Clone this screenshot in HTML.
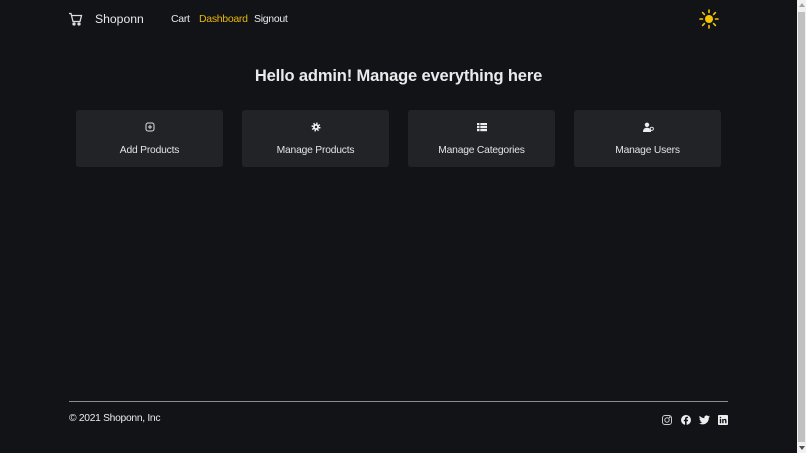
<!DOCTYPE html>
<html><head><meta charset="utf-8"><style>
*{margin:0;padding:0;box-sizing:border-box}
html,body{width:806px;height:453px;overflow:hidden;background:#121316;font-family:"Liberation Sans",sans-serif;color:#e9eaec}
.abs{position:absolute}
.nav{font-size:10.5px;letter-spacing:-0.3px;top:13px}
.card{position:absolute;top:110px;height:57px;background:#212327;border-radius:3px;text-align:center;font-size:10.3px;letter-spacing:-0.2px;color:#e2e3e5}
.card svg{position:absolute;top:12px;left:50%;margin-left:-5px}
.card span{position:absolute;top:35px;left:0;right:0}
</style></head><body>
<svg class="abs" style="left:68px;top:12px" width="15" height="14" viewBox="0 0 15 14" fill="none" stroke="#ddd" stroke-width="1.3"><path d="M1 1.5h2l2 8h7l1.5-6H4"/><circle cx="6" cy="12" r="1" fill="#ddd"/><circle cx="11" cy="12" r="1" fill="#ddd"/></svg>
<div class="abs" style="left:95px;top:12px;font-size:12.2px">Shoponn</div>
<div class="abs nav" style="left:171px">Cart</div>
<div class="abs nav" style="left:199px;color:#e5b80b">Dashboard</div>
<div class="abs nav" style="left:254px">Signout</div>
<svg class="abs" style="left:699px;top:9px" width="20" height="20" viewBox="0 0 20 20" stroke="#f5c400" stroke-width="1.6" stroke-linecap="round"><circle cx="10" cy="10" r="4" fill="#f5c400" stroke="none"/><path d="M10 1v2.5M10 16.5V19M1 10h2.5M16.5 10H19M3.6 3.6l1.8 1.8M14.6 14.6l1.8 1.8M3.6 16.4l1.8-1.8M14.6 5.4l1.8-1.8"/></svg>
<div class="abs" style="left:0;width:797px;top:67px;text-align:center;font-size:16.5px;font-weight:bold;letter-spacing:-0.15px">Hello admin! Manage everything here</div>
<div class="card" style="left:76px;width:147px"><svg width="10" height="10" viewBox="0 0 10 10" fill="none" stroke="#ddd" stroke-width="1"><rect x="1" y="1" width="8" height="8" rx="2"/><path d="M5 3v4M3 5h4"/></svg><span>Add Products</span></div>
<div class="card" style="left:242px;width:147px"><svg width="10" height="10" viewBox="0 0 10 10"><circle cx="5" cy="5" r="3.3" fill="none" stroke="#eee" stroke-width="2.4" stroke-dasharray="1.3 1.3"/><circle cx="5" cy="5" r="3" fill="#eee"/><circle cx="5" cy="5" r="1.2" fill="#212327"/></svg><span>Manage Products</span></div>
<div class="card" style="left:408px;width:147px"><svg width="10" height="10" viewBox="0 0 10 10" fill="#eee"><rect x="0" y="1" width="2.5" height="2.2"/><rect x="3.3" y="1" width="6.7" height="2.2"/><rect x="0" y="4" width="2.5" height="2.2"/><rect x="3.3" y="4" width="6.7" height="2.2"/><rect x="0" y="7" width="2.5" height="2.2"/><rect x="3.3" y="7" width="6.7" height="2.2"/></svg><span>Manage Categories</span></div>
<div class="card" style="left:574px;width:147px"><svg width="11" height="10" viewBox="0 0 11 10" fill="#eee"><circle cx="4" cy="2.8" r="2.2"/><path d="M0 10c0-3 1.5-4.3 4-4.3S8 7 8 10z"/><circle cx="8.8" cy="6.8" r="1.6" fill="none" stroke="#eee" stroke-width="0.9"/></svg><span>Manage Users</span></div>
<div class="abs" style="left:69px;top:401px;width:659px;height:1px;background:#8a8c90"></div>
<div class="abs" style="left:69px;top:413px;font-size:10.3px;letter-spacing:-0.3px">© 2021 Shoponn, Inc</div>
<svg class="abs" style="left:662px;top:415px" width="10" height="10" viewBox="0 0 10 10" fill="none" stroke="#ccc" stroke-width="1"><rect x="0.5" y="0.5" width="9" height="9" rx="2.5"/><circle cx="5" cy="5" r="2.2"/><circle cx="7.7" cy="2.3" r=".4" fill="#ccc"/></svg>
<svg class="abs" style="left:681px;top:415px" width="10" height="10" viewBox="0 0 10 10"><circle cx="5" cy="5" r="5" fill="#eee"/><path d="M5.6 10V6.2h1.3l.2-1.5H5.6v-.9c0-.4.1-.7.7-.7h.8V1.8c-.2 0-.6-.1-1.2-.1-1.1 0-1.9.7-1.9 2v1H2.8v1.5H4V10z" fill="#121316"/></svg>
<svg class="abs" style="left:699px;top:415px" width="11" height="10" viewBox="0 0 24 20"><path fill="#eee" d="M24 2.4a10 10 0 0 1-2.8.8A5 5 0 0 0 23.3.4a10 10 0 0 1-3.1 1.2A4.9 4.9 0 0 0 11.8 6 14 14 0 0 1 1.7.9a4.9 4.9 0 0 0 1.5 6.6A4.9 4.9 0 0 1 1 6.9a4.9 4.9 0 0 0 3.9 4.9 5 5 0 0 1-2.2.1 4.9 4.9 0 0 0 4.6 3.4A9.9 9.9 0 0 1 0 17.3 14 14 0 0 0 7.5 19.5c9.1 0 14-7.5 14-14v-.6A10 10 0 0 0 24 2.4z"/></svg>
<svg class="abs" style="left:718px;top:415px" width="10" height="10" viewBox="0 0 10 10"><rect width="10" height="10" rx="1" fill="#eee"/><rect x="1.8" y="4" width="1.4" height="4.3" fill="#121316"/><circle cx="2.5" cy="2.5" r=".8" fill="#121316"/><path d="M4.2 4h1.3v.7c.3-.5.8-.8 1.5-.8 1.1 0 1.5.7 1.5 1.8v2.6H7.1V6c0-.6-.1-1-.7-1-.6 0-.8.4-.8 1v2.3H4.2z" fill="#121316"/></svg>
<div class="abs" style="left:797px;top:0;width:9px;height:453px;background:#f1f1f1"></div>
<div class="abs" style="left:798px;top:12px;width:7px;height:430px;background:#c1c1c1"></div>
<div class="abs" style="left:799px;top:3px;width:0;height:0;border-left:3px solid transparent;border-right:3px solid transparent;border-bottom:4px solid #a3a3a3"></div>
<div class="abs" style="left:799px;top:446px;width:0;height:0;border-left:3px solid transparent;border-right:3px solid transparent;border-top:4px solid #505050"></div>
</body></html>
